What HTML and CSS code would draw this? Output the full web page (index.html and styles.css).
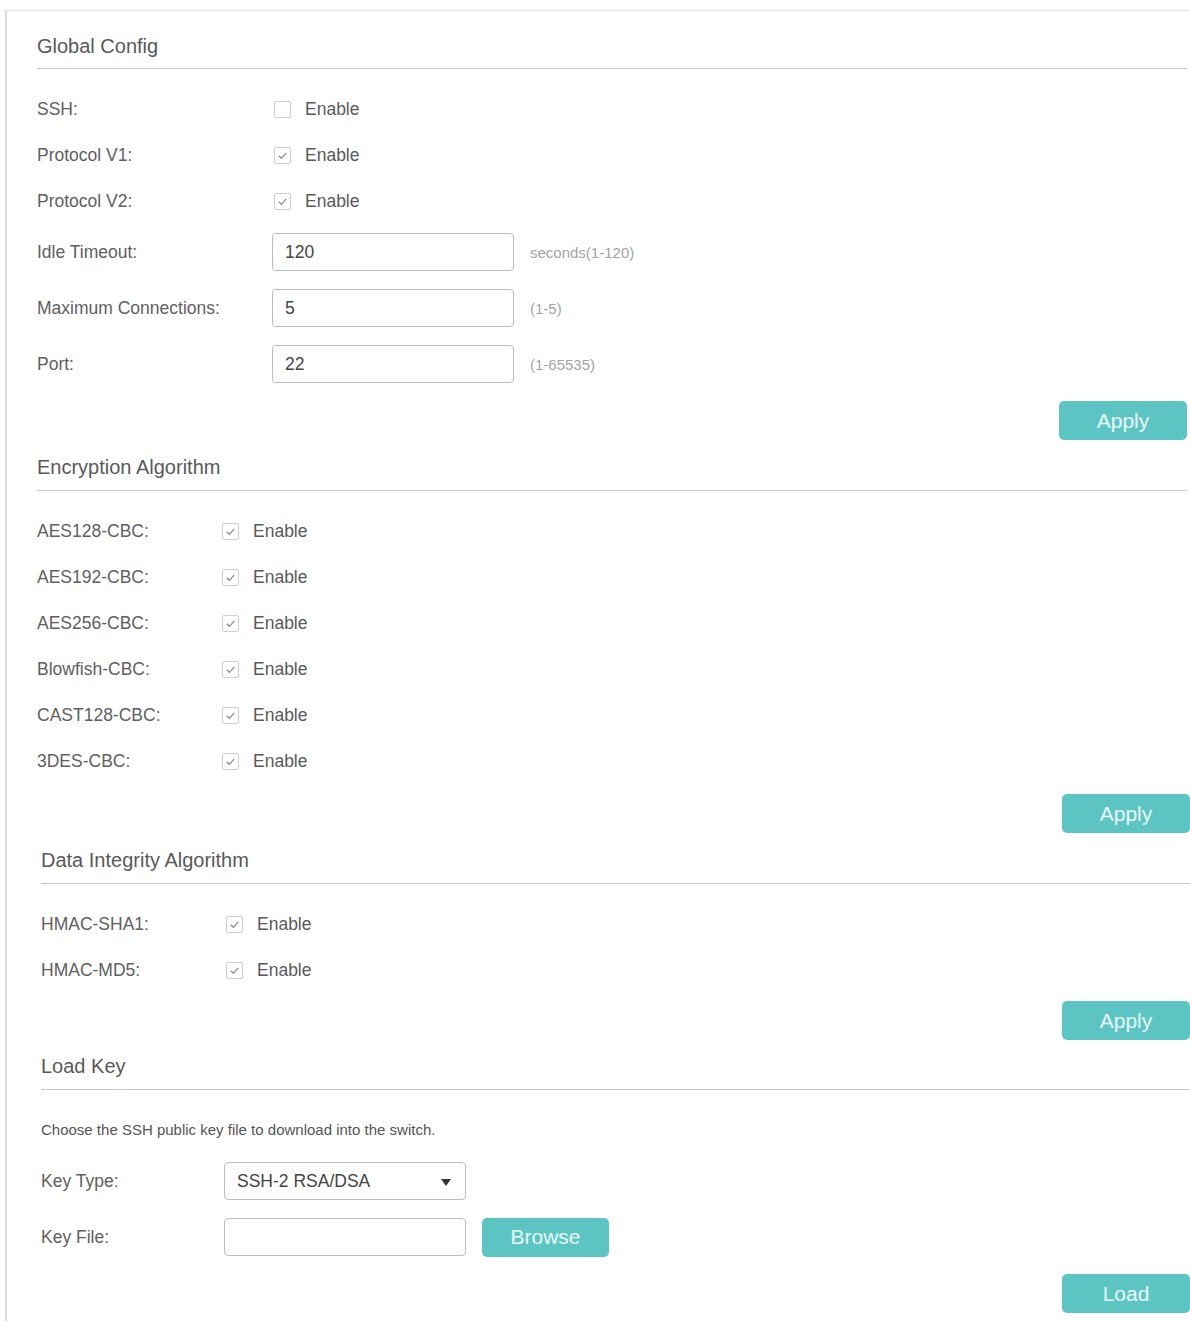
FILE: index.html
```html
<!DOCTYPE html>
<html>
<head>
<meta charset="utf-8">
<link rel="stylesheet" href="styles.css">
</head>
<body>
<div class="frame">
  <section class="sec sec-a">
    <h2 class="sec-title first">Global Config</h2>
    <div class="rows rows-gc">
      <div class="row chk-row"><span class="lbl w235">SSH:</span><span class="cb cb-off"></span><span class="cb-text">Enable</span></div>
      <div class="row chk-row"><span class="lbl w235">Protocol V1:</span><span class="cb"><svg viewBox="0 0 16 16"><path d="M4 8.3 L6.9 11 L12 5.2"/></svg></span><span class="cb-text">Enable</span></div>
      <div class="row chk-row"><span class="lbl w235">Protocol V2:</span><span class="cb"><svg viewBox="0 0 16 16"><path d="M4 8.3 L6.9 11 L12 5.2"/></svg></span><span class="cb-text">Enable</span></div>
      <div class="row in-row"><span class="lbl w235">Idle Timeout:</span><span class="field">120</span><span class="hint">seconds(1-120)</span></div>
      <div class="row in-row"><span class="lbl w235">Maximum Connections:</span><span class="field">5</span><span class="hint">(1-5)</span></div>
      <div class="row in-row"><span class="lbl w235">Port:</span><span class="field">22</span><span class="hint">(1-65535)</span></div>
    </div>
    <div class="actions act-1"><button class="btn">Apply</button></div>
  </section>

  <section class="sec sec-a">
    <h2 class="sec-title">Encryption Algorithm</h2>
    <div class="rows rows-enc">
      <div class="row chk-row"><span class="lbl w185">AES128-CBC:</span><span class="cb"><svg viewBox="0 0 16 16"><path d="M4 8.3 L6.9 11 L12 5.2"/></svg></span><span class="cb-text">Enable</span></div>
      <div class="row chk-row"><span class="lbl w185">AES192-CBC:</span><span class="cb"><svg viewBox="0 0 16 16"><path d="M4 8.3 L6.9 11 L12 5.2"/></svg></span><span class="cb-text">Enable</span></div>
      <div class="row chk-row"><span class="lbl w185">AES256-CBC:</span><span class="cb"><svg viewBox="0 0 16 16"><path d="M4 8.3 L6.9 11 L12 5.2"/></svg></span><span class="cb-text">Enable</span></div>
      <div class="row chk-row"><span class="lbl w185">Blowfish-CBC:</span><span class="cb"><svg viewBox="0 0 16 16"><path d="M4 8.3 L6.9 11 L12 5.2"/></svg></span><span class="cb-text">Enable</span></div>
      <div class="row chk-row"><span class="lbl w185">CAST128-CBC:</span><span class="cb"><svg viewBox="0 0 16 16"><path d="M4 8.3 L6.9 11 L12 5.2"/></svg></span><span class="cb-text">Enable</span></div>
      <div class="row chk-row"><span class="lbl w185">3DES-CBC:</span><span class="cb"><svg viewBox="0 0 16 16"><path d="M4 8.3 L6.9 11 L12 5.2"/></svg></span><span class="cb-text">Enable</span></div>
    </div>
    <div class="actions act-2"><button class="btn">Apply</button></div>
  </section>

  <section class="sec sec-b">
    <h2 class="sec-title">Data Integrity Algorithm</h2>
    <div class="rows rows-hmac">
      <div class="row chk-row"><span class="lbl w185">HMAC-SHA1:</span><span class="cb"><svg viewBox="0 0 16 16"><path d="M4 8.3 L6.9 11 L12 5.2"/></svg></span><span class="cb-text">Enable</span></div>
      <div class="row chk-row"><span class="lbl w185">HMAC-MD5:</span><span class="cb"><svg viewBox="0 0 16 16"><path d="M4 8.3 L6.9 11 L12 5.2"/></svg></span><span class="cb-text">Enable</span></div>
    </div>
    <div class="actions act-3"><button class="btn">Apply</button></div>
  </section>

  <section class="sec sec-b">
    <h2 class="sec-title t-load">Load Key</h2>
    <p class="desc">Choose the SSH public key file to download into the switch.</p>
    <div class="rows rows-key">
      <div class="row in-row"><span class="lbl w183">Key Type:</span><span class="field select">SSH-2 RSA/DSA<span class="caret"></span></span></div>
      <div class="row in-row"><span class="lbl w183">Key File:</span><span class="field"></span><button class="btn btn-browse">Browse</button></div>
    </div>
    <div class="actions act-4"><button class="btn">Load</button></div>
  </section>
</div>
</body>
</html>
```

FILE: styles.css
```css
* { box-sizing: border-box; }
html, body { margin: 0; padding: 0; background: #fff; }
body {
  font-family: "Liberation Sans", Arial, sans-serif;
  color: #5e5e5e;
  width: 1190px;
  height: 1321px;
  overflow: hidden;
}
.frame {
  margin: 10px 0 0 5px;
  border-top: 1px solid #e2e2e2;
  border-left: 2px solid #dcdcdc;
  height: 1320px;
}
.sec { margin: 0; }
.sec-a { padding: 0 3px 0 30px; }
.sec-b { padding: 0 0 0 34px; }
.sec-title {
  margin: 0;
  font-weight: normal;
  font-size: 20px;
  line-height: 24px;
  color: #595959;
  padding: 15px 0 11px;
  border-bottom: 1px solid #c8c8c8;
}
.sec-title.first { padding-top: 23px; padding-bottom: 10px; }
.sec-title.t-load { padding-top: 14px; }
.rows { display: flex; flex-direction: column; }
.rows-gc { margin-top: 17px; }
.rows-enc { margin-top: 17px; }
.rows-hmac { margin-top: 17px; }
.rows-key { margin-top: 13px; }
.row { display: flex; align-items: center; }
.chk-row { height: 46px; }
.in-row { height: 56px; }
.lbl { font-size: 17.5px; color: #606060; flex: none; }
.w235 { width: 235px; }
.w185 { width: 185px; }
.w183 { width: 183px; }
.cb {
  width: 17px; height: 17px;
  border: 1px solid #cfcfcf;
  border-radius: 2px;
  display: inline-flex;
  flex: none;
}
.w235 + .cb { margin-left: 2px; }
.cb svg { width: 15px; height: 15px; }
.cb svg path { fill: none; stroke: #8a8a8a; stroke-width: 1.3; }
.cb-text { margin-left: 14px; font-size: 17.5px; color: #5a5a5a; }
.field {
  width: 242px; height: 38px;
  border: 1px solid #bdbdbd;
  border-radius: 4px;
  display: flex; align-items: center;
  padding-left: 12px;
  font-size: 17.5px; color: #444;
  flex: none;
  position: relative;
}
.hint { margin-left: 16px; font-size: 15px; color: #a3a3a3; }
.select .caret {
  position: absolute; right: 14px; top: 16px;
  width: 0; height: 0;
  border-left: 5px solid transparent;
  border-right: 5px solid transparent;
  border-top: 7px solid #333;
}
.actions { display: flex; justify-content: flex-end; }
.act-1 { margin-top: 9px; }
.act-2 { margin-top: 10px; margin-right: -3px; }
.act-3 { margin-top: 8px; }
.act-4 { margin-top: 9px; }
.btn {
  width: 128px; height: 39px;
  background: #5cc5c4;
  border: none;
  border-radius: 5px;
  color: #eafcfb;
  font-family: "Liberation Sans", Arial, sans-serif;
  font-size: 21px;
  padding: 0;
  cursor: pointer;
}
.btn-browse { margin-left: 16px; width: 127px; }
.desc {
  margin: 30px 0 0;
  font-size: 15px;
  line-height: 20px;
  color: #555;
}
```
